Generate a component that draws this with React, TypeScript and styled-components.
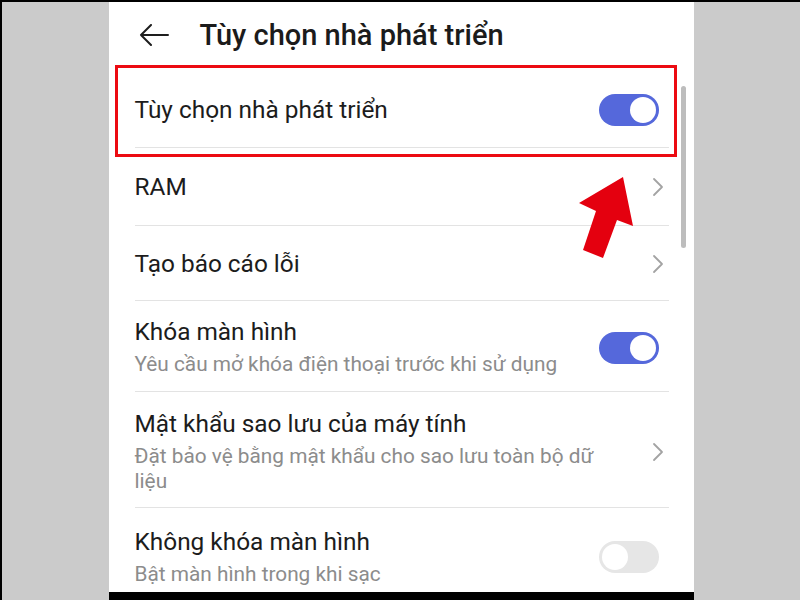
import styled, { createGlobalStyle } from 'styled-components';

const GlobalStyle = createGlobalStyle`
  html, body {
    margin: 0;
    padding: 0;
    background: #cbcbcb;
  }
  * {
    box-sizing: border-box;
  }
`;

const Frame = styled.div`
  width: 800px;
  height: 600px;
  background: #cbcbcb;
  border-top: 2px solid #000;
  border-left: 2px solid #000;
  display: flex;
  justify-content: center;
  overflow: hidden;
  font-family: Roboto, 'Noto Sans', 'Liberation Sans', sans-serif;
`;

const Phone = styled.div`
  width: 585px;
  height: 100%;
  background: #fff;
  position: relative;
  display: flex;
  flex-direction: column;
  overflow: hidden;
`;

const Header = styled.header`
  height: 65px;
  display: flex;
  align-items: center;
  padding: 3px 0 0 30px;
  gap: 31px;
`;

const BackButton = styled.div`
  width: 30px;
  height: 24px;
  display: flex;
  align-items: center;
`;

const Title = styled.h1`
  margin: 0;
  font-size: 29px;
  font-weight: 500;
  color: #1b1b1b;
`;

const List = styled.div`
  padding: 0 25px 0 26px;
  flex: 1;
`;

const Row = styled.div<{ $h: number; $pt?: number; $last?: boolean }>`
  position: relative;
  min-height: ${p => p.$h}px;
  padding-top: ${p => p.$pt ?? 0}px;
  display: flex;
  align-items: center;
  gap: 16px;
  border-bottom: ${p => (p.$last ? 'none' : '1px solid #e3e3e3')};
`;

const TextBlock = styled.div<{ $max?: number }>`
  flex: ${p => (p.$max ? `0 0 ${p.$max}px` : '1')};
  display: flex;
  flex-direction: column;
  gap: 6px;
`;

const RowTitle = styled.div`
  font-size: 24.4px;
  color: #1c1c1c;
  line-height: 28px;
`;

const RowSub = styled.div`
  font-size: 20.8px;
  color: #8c8c8c;
  line-height: 25px;
`;

const Spacer = styled.div`
  flex: 1;
`;

const Track = styled.div<{ $on: boolean }>`
  width: 60px;
  height: 32px;
  border-radius: 16px;
  margin-right: 10px;
  background: ${p => (p.$on ? '#5568db' : '#e6e6e6')};
  display: flex;
  align-items: center;
  justify-content: ${p => (p.$on ? 'flex-end' : 'flex-start')};
  padding: 0 3px;
  flex-shrink: 0;
`;

const Knob = styled.div`
  width: 26px;
  height: 26px;
  border-radius: 50%;
  background: #fff;
`;

const Chevron = styled.div`
  width: 12px;
  display: flex;
  margin-right: 5px;
  flex-shrink: 0;
`;

const Highlight = styled.div`
  position: absolute;
  left: -20px;
  right: -8px;
  top: 0;
  bottom: -10px;
  border: 3px solid #ec0b12;
  pointer-events: none;
`;

const Scrollbar = styled.div`
  position: absolute;
  right: 8px;
  top: 84px;
  width: 5px;
  height: 162px;
  border-radius: 3px;
  background: #bdbdbd;
`;

const Arrow = styled.svg`
  position: absolute;
  left: 465px;
  top: 172px;
`;

const NavEdge = styled.div`
  position: absolute;
  left: 0;
  right: 0;
  bottom: 0;
  height: 8px;
  background: #000;
`;

function Toggle({ on }: { on: boolean }) {
  return (
    <Track $on={on}>
      <Knob />
    </Track>
  );
}

function ChevronIcon() {
  return (
    <Chevron>
      <svg width="12" height="20" viewBox="0 0 12 20">
        <path d="M2 2 L10 10 L2 18" fill="none" stroke="#a3a3a3" strokeWidth="1.8" strokeLinecap="round" strokeLinejoin="round" />
      </svg>
    </Chevron>
  );
}

export default function App() {
  return (
    <>
      <GlobalStyle />
      <Frame>
        <Phone>
          <Header>
            <BackButton>
              <svg width="30" height="22" viewBox="0 0 30 22">
                <path d="M29 11 H2 M12 1 L2 11 L12 21" fill="none" stroke="#1e1e1e" strokeWidth="2" strokeLinecap="round" strokeLinejoin="round" />
              </svg>
            </BackButton>
            <Title>Tùy chọn nhà phát triển</Title>
          </Header>
          <List>
            <Row $h={83} $pt={8}>
              <TextBlock>
                <RowTitle>Tùy chọn nhà phát triển</RowTitle>
              </TextBlock>
              <Toggle on />
              <Highlight />
            </Row>
            <Row $h={78}>
              <TextBlock>
                <RowTitle>RAM</RowTitle>
              </TextBlock>
              <ChevronIcon />
            </Row>
            <Row $h={75} $pt={2}>
              <TextBlock>
                <RowTitle>Tạo báo cáo lỗi</RowTitle>
              </TextBlock>
              <ChevronIcon />
            </Row>
            <Row $h={91} $pt={3}>
              <TextBlock>
                <RowTitle>Khóa màn hình</RowTitle>
                <RowSub>Yêu cầu mở khóa điện thoại trước khi sử dụng</RowSub>
              </TextBlock>
              <Toggle on />
            </Row>
            <Row $h={116} $pt={5}>
              <TextBlock $max={480}>
                <RowTitle>Mật khẩu sao lưu của máy tính</RowTitle>
                <RowSub>Đặt bảo vệ bằng mật khẩu cho sao lưu toàn bộ dữ liệu</RowSub>
              </TextBlock>
              <Spacer />
              <ChevronIcon />
            </Row>
            <Row $h={92} $pt={6} $last>
              <TextBlock>
                <RowTitle>Không khóa màn hình</RowTitle>
                <RowSub>Bật màn hình trong khi sạc</RowSub>
              </TextBlock>
              <Toggle on={false} />
            </Row>
          </List>
          <Scrollbar />
          <Arrow width="64" height="90" viewBox="0 0 64 90">
            <polygon points="49,3 5,29 22,37 9,76 29,84 43,46 59,52" fill="#e4000f" />
          </Arrow>
          <NavEdge />
        </Phone>
      </Frame>
    </>
  );
}
